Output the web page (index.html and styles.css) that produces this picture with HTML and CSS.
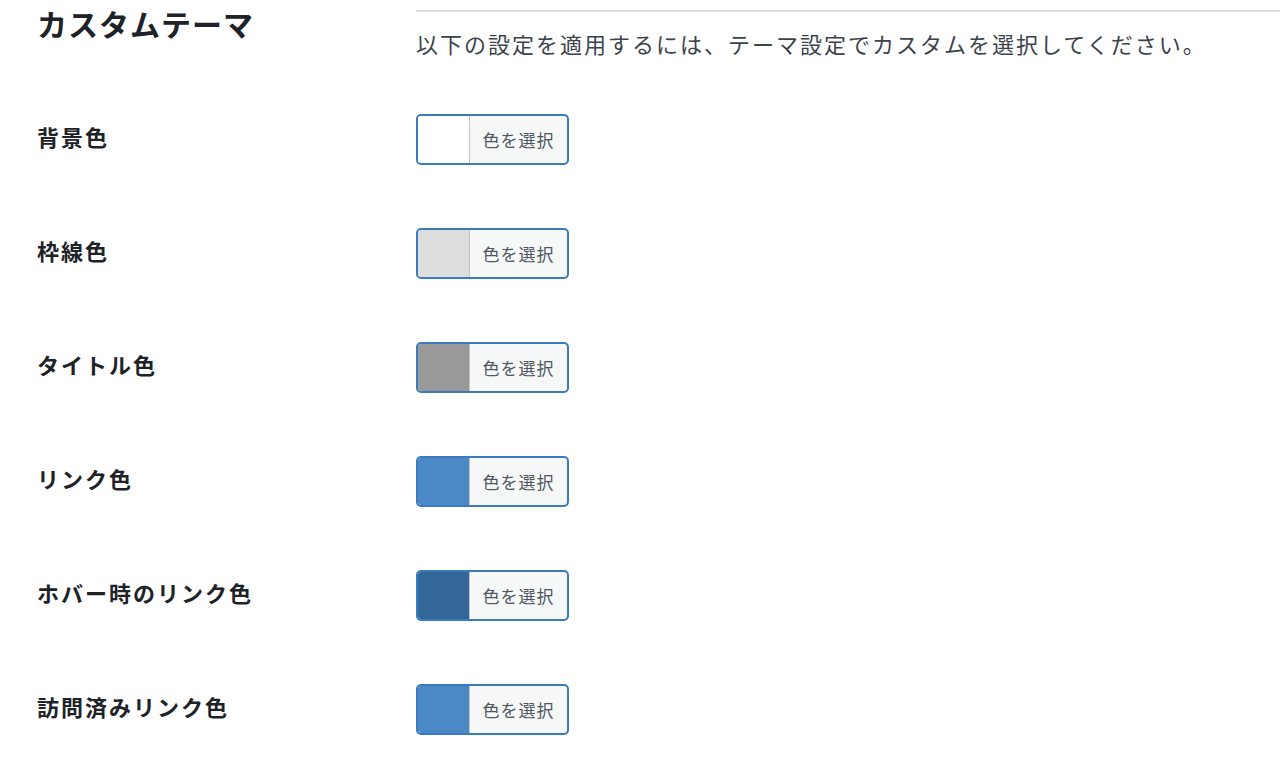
FILE: index.html
```html
<!DOCTYPE html>
<html lang="ja">
<head>
  <meta charset="UTF-8" />
  <meta name="viewport" content="width=device-width, initial-scale=1.0"/>
  <title>カスタムテーマ</title>
  <link rel="stylesheet" href="styles.css">
</head>
<body>
  <div class="settings">
    <h2 class="settings-title">カスタムテーマ</h2>
    <div class="intro">
      <p>以下の設定を適用するには、テーマ設定でカスタムを選択してください。</p>
    </div>

    <div class="rows">
      <div class="row">
        <div class="label">背景色</div>
        <button class="color-btn" type="button">
          <span class="swatch swatch-bg"></span>
          <span class="btn-text">色を選択</span>
        </button>
      </div>
      <div class="row">
        <div class="label">枠線色</div>
        <button class="color-btn" type="button">
          <span class="swatch swatch-border"></span>
          <span class="btn-text">色を選択</span>
        </button>
      </div>
      <div class="row">
        <div class="label">タイトル色</div>
        <button class="color-btn" type="button">
          <span class="swatch swatch-title"></span>
          <span class="btn-text">色を選択</span>
        </button>
      </div>
      <div class="row">
        <div class="label">リンク色</div>
        <button class="color-btn" type="button">
          <span class="swatch swatch-link"></span>
          <span class="btn-text">色を選択</span>
        </button>
      </div>
      <div class="row">
        <div class="label">ホバー時のリンク色</div>
        <button class="color-btn" type="button">
          <span class="swatch swatch-hover"></span>
          <span class="btn-text">色を選択</span>
        </button>
      </div>
      <div class="row">
        <div class="label">訪問済みリンク色</div>
        <button class="color-btn" type="button">
          <span class="swatch swatch-visited"></span>
          <span class="btn-text">色を選択</span>
        </button>
      </div>
    </div>
  </div>
</body>
</html>
```

FILE: styles.css
```css
* {
  margin: 0;
  padding: 0;
  box-sizing: border-box;
}

body {
  background-color: #fff;
  font-family: "Noto Sans CJK JP", "Noto Sans", sans-serif;
  color: #1d2327;
}

.settings {
  display: grid;
  grid-template-columns: 379px 1fr;
  padding: 10px 0 0 37px;
}

.settings-title {
  font-size: 30px;
  font-weight: bold;
  line-height: 1.3;
  margin-top: -6px;
  letter-spacing: 1px;
  color: #1d2327;
}

.intro {
  border-top: 2px solid #dcdcde;
  padding-top: 15px;
}

.intro p {
  font-size: 22px;
  line-height: 33px;
  letter-spacing: 2px;
  color: #3c434a;
}

.rows {
  grid-column: 1 / 3;
  display: flex;
  flex-direction: column;
  gap: 63px;
  margin-top: 54px;
}

.row {
  display: grid;
  grid-template-columns: 379px auto;
  align-items: center;
}

.label {
  font-size: 22px;
  font-weight: bold;
  letter-spacing: 2px;
  padding-bottom: 8px;
  color: #1d2327;
}

.color-btn {
  display: flex;
  width: 153px;
  height: 51px;
  border: 2px solid #3a7bc0;
  border-radius: 5px;
  background: #f6f7f7;
  overflow: hidden;
  cursor: pointer;
  font-family: inherit;
}

.swatch {
  width: 52px;
  height: 100%;
  border-right: 1px solid #c3c4c7;
}

.swatch-bg { background: #ffffff; }
.swatch-border { background: #dddddd; }
.swatch-title { background: #999999; }
.swatch-link { background: #4b88c6; }
.swatch-hover { background: #336699; }
.swatch-visited { background: #4b88c6; }

.btn-text {
  flex: 1;
  display: flex;
  align-items: center;
  justify-content: center;
  font-size: 17px;
  letter-spacing: 1px;
  color: #50575e;
}
```
